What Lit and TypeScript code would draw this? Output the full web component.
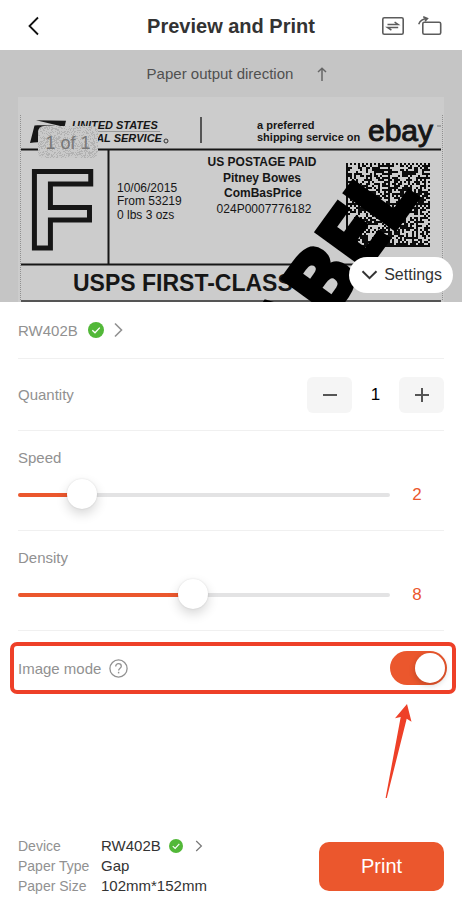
import { LitElement, html, css } from "lit";
import { customElement, property, state } from "lit/decorators.js";

/** Small seeded generator so that the printed textures are always the same. */
function seeded(seed: number) {
  let s = seed;
  return () => {
    s = (s * 1103515245 + 12345) % 2147483648;
    return s / 2147483648;
  };
}

/** 2x2 block data matrix: solid left and bottom edges, dotted top and right edges. */
function matrixPath(size: number): string {
  const rnd = seeded(77);
  const half = size / 2;
  let d = "";
  for (let y = 0; y < size; y++) {
    for (let x = 0; x < size; x++) {
      const bx = x % half;
      const by = y % half;
      let on: boolean;
      if (bx === 0 || by === half - 1) on = true;
      else if (by === 0) on = bx % 2 === 0;
      else if (bx === half - 1) on = by % 2 === 1;
      else on = rnd() < 0.5;
      if (on) d += `M${x} ${y}h1v1h-1z`;
    }
  }
  return d;
}

/** Scattered one-unit dots. */
function grainPath(w: number, h: number, density: number): string {
  const rnd = seeded(19);
  let d = "";
  for (let y = 0; y < h; y++)
    for (let x = 0; x < w; x++) if (rnd() < density) d += `M${x} ${y}h1v1h-1z`;
  return d;
}

const MATRIX = matrixPath(42);
const GRAIN = grainPath(60, 32, 0.36);

const check = (size: number) => html`<svg width=${size} height=${size} viewBox="0 0 16 16" aria-label="connected">
  <circle cx="8" cy="8" r="8" fill="#52b838"></circle>
  <path d="M4.3 8.2 7 10.8 11.8 5.6" fill="none" stroke="#fff" stroke-width="1.3"></path>
</svg>`;

@customElement("label-preview")
export class LabelPreview extends LitElement {
  static styles = css`
    :host {
      display: block;
    }
    .art {
      display: block;
      width: 100%;
      height: auto;
      font-family: "Liberation Sans", Arial, sans-serif;
      font-size: 12px;
      fill: #161616;
    }
    .bold {
      font-weight: 700;
    }
    .brand {
      font-size: 11px;
      font-weight: 700;
      font-style: italic;
    }
    .slogan {
      font-size: 11px;
      font-weight: 700;
    }
    .ebay {
      font-size: 30px;
      stroke: #161616;
      stroke-width: 1px;
    }
    .class-letter {
      font-size: 111px;
      font-weight: 700;
      fill: none;
      stroke: #161616;
      stroke-width: 5px;
    }
    .service {
      font-size: 23px;
      font-weight: 700;
    }
    .stamp {
      font-family: "Open Sans", "Noto Sans", sans-serif;
      font-size: 86px;
      font-weight: 700;
      fill: #000;
      stroke: #000;
      stroke-width: 5px;
    }
    .page {
      font-size: 18px;
      fill: #777;
    }
  `;

  render() {
    return html`<svg class="art" viewBox="0 50 462 252" role="img" aria-label="Shipping label">
      <rect x="0" y="50" width="462" height="252" fill="#c5c5c5"></rect>
      <rect x="18" y="97" width="426" height="205" fill="#cccccc"></rect>
      <path d="M20.5 115V301M442.5 115V301" stroke="#909090" stroke-dasharray="1 1" fill="none"></path>

      <path d="M36 120.3 66 120.8 64.5 127 Z"></path>
      <path d="M34.5 125.5C45 125 58 126 65 127.5L56 135C50 141 40 142 30 143Z"></path>
      <text class="brand" x="72" y="129">UNITED STATES</text>
      <path d="M70 131.5H160" stroke="#999" fill="none"></path>
      <text class="brand" x="67" y="142">POSTAL SERVICE</text>
      <circle cx="166" cy="141" r="2" fill="none" stroke="#333" stroke-width="1"></circle>
      <path d="M201 117V143" stroke="#555" stroke-width="2" fill="none"></path>
      <text class="slogan" x="257" y="129">a preferred</text>
      <text class="slogan" x="257" y="141">shipping service on</text>
      <text class="ebay" x="368" y="141">ebay</text>
      <path d="M437 126h4" stroke="#777" fill="none"></path>

      <path d="M21 149.5H441M21 264.5H441M108.5 149V264" stroke="#161616" stroke-width="2" fill="none"></path>
      <path d="M21 301H441" stroke="#555" stroke-width="2" fill="none"></path>

      <text class="class-letter" x="27" y="248">F</text>
      <text x="117" y="192">10/06/2015</text>
      <text x="117" y="205">From 53219</text>
      <text x="117" y="219">0 lbs 3 ozs</text>
      <g text-anchor="middle">
        <text class="bold" x="262" y="166">US POSTAGE PAID</text>
        <text class="bold" x="262" y="182">Pitney Bowes</text>
        <text class="bold" x="263" y="197">ComBasPrice</text>
        <text x="264" y="213">024P0007776182</text>
      </g>
      <text class="service" x="73" y="291">USPS FIRST-CLASS</text>

      <path d=${MATRIX} transform="translate(346 163) scale(2)" fill="#0c0c0c"></path>
      <text class="stamp" transform="translate(265 408) rotate(-54)">LABEL</text>

      <rect x="38" y="126" width="60" height="32" rx="6" fill="#c9c9c9"></rect>
      <clipPath id="badge"><rect width="60" height="32" rx="6"></rect></clipPath>
      <g transform="translate(38 126)"><path d=${GRAIN} fill="#b2b2b2" clip-path="url(#badge)"></path></g>
      <text class="page" x="68" y="149" text-anchor="middle">1 of 1</text>
    </svg>`;
  }
}

@customElement("level-slider")
export class LevelSlider extends LitElement {
  @property() label = "";
  @property({ type: Number }) max = 10;
  @property({ type: Number }) value = 1;

  static styles = css`
    :host {
      display: block;
    }
    .label {
      display: block;
      line-height: 20px;
      color: #919191;
    }
    .line {
      display: grid;
      grid-template-columns: 1fr 54px;
      align-items: center;
      margin-top: 12px;
    }
    .range {
      appearance: none;
      width: 100%;
      height: 30px;
      margin: 0;
      background: none;
    }
    .range::-webkit-slider-runnable-track {
      height: 4px;
      border-radius: 2px;
      background: linear-gradient(to right, #eb572d var(--fill), #e3e3e4 var(--fill));
    }
    .range::-webkit-slider-thumb {
      appearance: none;
      width: 30px;
      height: 30px;
      margin-top: -14px;
      border-radius: 50%;
      background: #fff;
      box-shadow: 0 5px 12px rgba(0, 0, 0, 0.16), 0 0 2px rgba(0, 0, 0, 0.12);
    }
    .value {
      text-align: center;
      font-size: 17px;
      line-height: 30px;
      color: #eb572d;
    }
  `;

  render() {
    const fill = ((this.value - 1) / (this.max - 1)) * 100;
    return html`<label class="label" for="range">${this.label}</label>
      <div class="line">
        <input
          class="range"
          id="range"
          type="range"
          min="1"
          max=${this.max}
          .value=${String(this.value)}
          style="--fill:${fill}%"
          @input=${(e: Event) => (this.value = Number((e.target as HTMLInputElement).value))}
        />
        <output class="value" for="range">${this.value}</output>
      </div>`;
  }
}

@customElement("app-root")
export class AppRoot extends LitElement {
  @state() private quantity = 1;

  static styles = css`
    :host {
      display: flex;
      flex-direction: column;
      min-height: 100vh;
      box-sizing: border-box;
      padding-right: 3px;
      background: #fff;
      color: #333;
      font-family: "Liberation Sans", Arial, sans-serif;
      font-size: 15px;
    }
    button {
      font: inherit;
      color: inherit;
      border: 0;
      padding: 0;
      background: none;
      cursor: pointer;
    }
    svg {
      display: block;
    }
    .header {
      display: grid;
      grid-template-columns: 1fr auto 1fr;
      align-items: center;
      box-sizing: border-box;
      height: 50px;
      padding: 2px 20px 0;
    }
    .title {
      margin: 0;
      font-size: 20px;
      line-height: 48px;
      font-weight: 700;
      color: #333;
    }
    .back {
      justify-self: start;
      margin-left: 4px;
    }
    .tools {
      display: flex;
      align-items: center;
      justify-content: flex-end;
      gap: 14px;
    }
    .preview {
      position: relative;
    }
    .direction {
      position: absolute;
      inset: 0 0 auto 0;
      display: flex;
      align-items: center;
      justify-content: center;
      gap: 24px;
      padding-left: 12px;
      line-height: 47px;
      color: #505050;
    }
    .settings {
      position: absolute;
      right: 9px;
      bottom: 9px;
      display: flex;
      align-items: center;
      gap: 6px;
      height: 36px;
      padding: 0 11px 0 12px;
      border-radius: 18px;
      background: #fff;
      font-size: 16px;
      color: #333;
    }
    .row {
      display: flex;
      align-items: center;
      box-sizing: border-box;
      margin: 0 18px;
      border-bottom: 1px solid #f0f0f0;
      color: #919191;
    }
    .device-row {
      height: 57px;
    }
    .device-link {
      display: flex;
      align-items: center;
      gap: 10px;
    }
    .quantity-row {
      height: 72px;
      justify-content: space-between;
    }
    .stepper {
      display: flex;
    }
    .step {
      display: grid;
      place-items: center;
      width: 45px;
      height: 36px;
      border-radius: 6px;
      background: #f5f5f5;
    }
    .count {
      box-sizing: border-box;
      width: 47px;
      padding: 0;
      border: 0;
      text-align: center;
      font: inherit;
      font-size: 17px;
      color: #000;
      background: none;
    }
    .slider-row {
      display: block;
      height: 100px;
      padding-top: 17px;
    }
    .mode-row {
      position: relative;
      display: flex;
      align-items: center;
      justify-content: space-between;
      height: 52px;
      margin: 11px 6px 0 10px;
      padding: 0 9px 0 8px;
      box-sizing: border-box;
      color: #919191;
    }
    .mode-row::after {
      content: "";
      position: absolute;
      inset: 0;
      border: 4px solid #ee4028;
      border-radius: 7px;
      pointer-events: none;
    }
    .mode-name {
      display: flex;
      align-items: center;
      gap: 8px;
    }
    .switch {
      appearance: none;
      display: flex;
      align-items: center;
      justify-content: flex-end;
      box-sizing: border-box;
      width: 57px;
      height: 34px;
      margin: 0;
      padding: 2px;
      border-radius: 17px;
      background: #eb572d;
    }
    .switch::before {
      content: "";
      width: 30px;
      height: 30px;
      border-radius: 50%;
      background: #fff;
      box-shadow: 0 2px 6px rgba(0, 0, 0, 0.2);
    }
    .switch:not(:checked) {
      justify-content: flex-start;
      background: #ddd;
    }
    .pointer {
      position: absolute;
      top: 62px;
      right: 44px;
    }
    .footer {
      display: flex;
      align-items: center;
      justify-content: space-between;
      margin-top: auto;
      padding: 0 18px 19px;
    }
    .facts {
      display: grid;
      grid-template-columns: 83px auto;
      margin: 0;
      line-height: 20px;
    }
    .fact-name {
      font-size: 14px;
      color: #919191;
    }
    .fact {
      margin: 0;
    }
    .device {
      display: flex;
      align-items: center;
      gap: 8px;
    }
    .device-more {
      margin-left: 4px;
    }
    .print {
      width: 125px;
      height: 49px;
      border-radius: 10px;
      background: #eb572d;
      color: #fff;
      font-size: 20px;
    }
  `;

  private step(by: number) {
    this.quantity = Math.max(1, this.quantity + by);
  }

  render() {
    return html`
      <header class="header">
        <button class="back" aria-label="Back">
          <svg width="18" height="20" viewBox="0 0 18 20" fill="none" stroke="#111" stroke-width="1.8">
            <path d="M14 1.5 5.5 10 14 18.5"></path>
          </svg>
        </button>
        <h1 class="title">Preview and Print</h1>
        <div class="tools">
          <button aria-label="Swap">
            <svg width="22" height="18" viewBox="0 0 22 18" fill="none" stroke="#5c5c5c">
              <rect x="0.8" y="0.8" width="20.4" height="16.4" rx="1.5" stroke-width="1.6"></rect>
              <path d="M5.5 7.6H16.2L12.6 5M16.2 10.4H5.5L9.4 13.1" stroke-width="1.5"></path>
            </svg>
          </button>
          <button aria-label="Rotate">
            <svg width="24" height="20" viewBox="0 0 24 20" fill="none" stroke="#5c5c5c">
              <rect x="4.8" y="6.3" width="17.9" height="12" rx="1.5" stroke-width="1.6"></rect>
              <path d="M0.7 8.2C2 4.8 4.9 2.7 9.3 2.5M5.2 0.7 9.5 2.5 7 5.2" stroke-width="1.5"></path>
            </svg>
          </button>
        </div>
      </header>

      <section class="preview">
        <label-preview></label-preview>
        <div class="direction">
          Paper output direction
          <svg width="10" height="14" viewBox="0 0 10 14" fill="none" stroke="#666" stroke-width="1.5">
            <path d="M5 14V1.5M1 5 5 1.2 9 5"></path>
          </svg>
        </div>
        <button class="settings">
          <svg width="17" height="10" viewBox="0 0 17 10" fill="none" stroke="#333" stroke-width="2">
            <path d="M1.5 1.2 8.5 8.2 15.5 1.2"></path>
          </svg>
          Settings
        </button>
      </section>

      <div class="row device-row">
        <button class="device-link">
          RW402B ${check(16)}
          <svg width="9" height="16" viewBox="0 0 9 16" fill="none" stroke="#919191" stroke-width="1.6">
            <path d="M1 1.5 7.5 8 1 14.5"></path>
          </svg>
        </button>
      </div>

      <div class="row quantity-row">
        <label for="quantity">Quantity</label>
        <div class="stepper">
          <button class="step" aria-label="Less" @click=${() => this.step(-1)}>
            <svg width="14" height="14" viewBox="0 0 14 14" stroke="#555" stroke-width="2"><path d="M0 7H14"></path></svg>
          </button>
          <input class="count" id="quantity" inputmode="numeric" .value=${String(this.quantity)} />
          <button class="step" aria-label="More" @click=${() => this.step(1)}>
            <svg width="14" height="14" viewBox="0 0 14 14" stroke="#555" stroke-width="2">
              <path d="M0 7H14M7 0V14"></path>
            </svg>
          </button>
        </div>
      </div>

      <level-slider class="row slider-row" label="Speed" max="8" value="2"></level-slider>
      <level-slider class="row slider-row" label="Density" max="16" value="8"></level-slider>

      <div class="mode-row">
        <div class="mode-name">
          <label for="mode">Image mode</label>
          <svg width="19" height="19" viewBox="0 0 19 19" fill="none" stroke="#919191">
            <circle cx="9.5" cy="9.5" r="8.6" stroke-width="1.3"></circle>
            <path
              d="M6.7 7.4C6.7 5.6 7.9 4.7 9.5 4.7S12.3 5.7 12.3 7.2C12.3 9.2 9.6 9.2 9.6 11.6"
              stroke-width="1.3"
            ></path>
            <path d="M9.6 12.8V14.4" stroke-width="1.4"></path>
          </svg>
        </div>
        <input class="switch" id="mode" type="checkbox" role="switch" checked />
        <svg class="pointer" width="27" height="95" viewBox="0 0 27 95" fill="#ee4028">
          <path d="M22 0 26.5 17.7 21.7 14.7 1.8 94H0.6L15.7 13 10 14.2Z"></path>
        </svg>
      </div>

      <footer class="footer">
        <dl class="facts">
          <dt class="fact-name">Device</dt>
          <dd class="fact device">
            RW402B ${check(14)}
            <svg class="device-more" width="8" height="12" viewBox="0 0 8 12" fill="none" stroke="#777" stroke-width="1.2">
              <path d="M1.2 1 6.4 6 1.2 11"></path>
            </svg>
          </dd>
          <dt class="fact-name">Paper Type</dt>
          <dd class="fact">Gap</dd>
          <dt class="fact-name">Paper Size</dt>
          <dd class="fact">102mm*152mm</dd>
        </dl>
        <button class="print">Print</button>
      </footer>
    `;
  }
}
